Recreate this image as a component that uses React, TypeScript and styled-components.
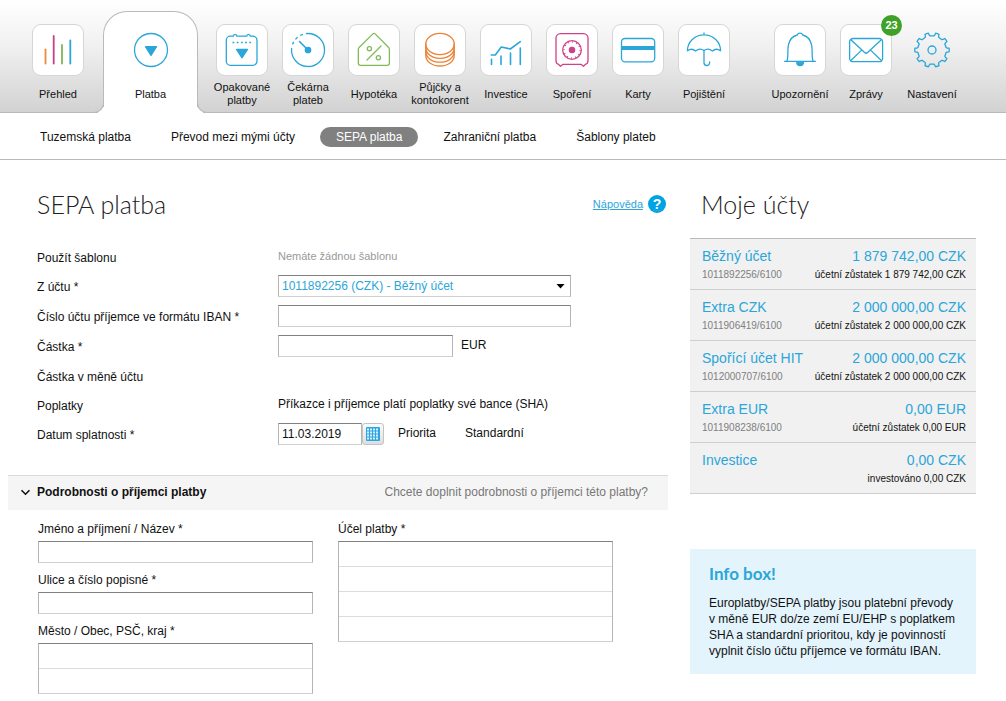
import React from "react";
import styled, { createGlobalStyle, css } from "styled-components";

const BLUE = "#2ba6d9";
const HEADING = `"Century Gothic", "Lato", sans-serif`;

const GlobalStyle = createGlobalStyle`
  *, *::before, *::after { box-sizing: border-box; }
  body {
    margin: 0;
    background: #fff;
    color: #111;
    font: 12px/16px Arial, "Liberation Sans", sans-serif;
  }
  input, select, textarea, button { font: inherit; color: inherit; }
`;

/* ---------- icons ---------- */

const Glyph = styled.svg<{ $color?: string }>`
  display: block;
  width: 50px;
  height: 50px;
  fill: none;
  stroke: ${(p) => p.$color ?? BLUE};
  stroke-width: 1.3;
  stroke-linecap: round;
  stroke-linejoin: round;
`;

const Icon = ({ color, children }: { color?: string; children: React.ReactNode }) => (
  <Glyph viewBox="1 1 50 50" $color={color} aria-hidden="true">
    {children}
  </Glyph>
);

const OverviewIcon = () => (
  <Icon>
    <g strokeWidth="1.8">
      <path d="M13.5 25.5V39.5" stroke="#f0883a" />
      <path d="M21.7 12V39.5" stroke="#c8417f" />
      <path d="M30 21V39.5" stroke="#7fb556" />
      <path d="M38.3 16.5V39.5" stroke={BLUE} />
    </g>
  </Icon>
);

const PaymentIcon = () => (
  <Icon>
    <circle cx="26" cy="26" r="16.5" />
    <path d="M20.5 22.7H31.5L26 31.5Z" fill={BLUE} />
  </Icon>
);

const CalendarIcon = () => (
  <Icon>
    <path d="M17.4 12.2H14.3a4 4 0 0 0-4 4V37.3a4 4 0 0 0 4 4H37a4 4 0 0 0 4-4V16.2a4 4 0 0 0-4-4H34.2M17.4 12.2C17.4 9.7 20.8 9.7 20.8 12.2H30.8C30.8 9.7 34.2 9.7 34.2 12.2" />
    <path d="M16.5 18.5H36" strokeDasharray="1.8 2.4" strokeLinecap="butt" />
    <path d="M20.5 25.5H31.5L26 33.8Z" fill={BLUE} />
  </Icon>
);

const WaitingIcon = () => (
  <Icon>
    <path d="M26 9.5A16.5 16.5 0 1 1 9.6 24.5" />
    <path d="M10.5 20.5A16.5 16.5 0 0 1 26 9.5" strokeDasharray="3 3" strokeLinecap="butt" />
    <path d="M17.5 17.5L26 26" strokeWidth="1.6" />
    <circle cx="26" cy="26" r="2.7" fill={BLUE} />
  </Icon>
);

const MortgageIcon = () => (
  <Icon color="#7fbb57">
    <path d="M24.9 9.9L11.3 23.2a3 3 0 0 0-1 2.2V39a2.3 2.3 0 0 0 2.3 2.3H39.1A2.3 2.3 0 0 0 41.4 39V25.4a3 3 0 0 0-1-2.2L27.1 9.9a1.6 1.6 0 0 0-2.2 0Z" />
    <path d="M33 22L19 36" />
    <circle cx="21.4" cy="24.7" r="2.1" />
    <circle cx="30.4" cy="33.7" r="2.1" />
  </Icon>
);

const LoansIcon = () => (
  <Icon color="#ee8033">
    <ellipse cx="26" cy="20" rx="14.2" ry="10.6" />
    <path d="M11.8 20V31.5C11.8 37.5 18 42 26 42S40.2 37.5 40.2 31.5V20" />
    <path d="M11.8 23.7C11.8 29.7 18 34.4 26 34.4S40.2 29.7 40.2 23.7" />
    <path d="M11.8 27.6C11.8 33.6 18 38.2 26 38.2S40.2 33.6 40.2 27.6" />
  </Icon>
);

const InvestIcon = () => (
  <Icon>
    <g strokeWidth="1.6">
      <path d="M11.3 31H15.3L21.3 23L30.3 25L40.3 17.7" />
      <path d="M11.5 35.4V40.4M21 32V40.4M30.5 29V40.4M40.3 24V40.4" />
    </g>
  </Icon>
);

const SafeIcon = () => (
  <Icon color="#d0418c">
    <path d="M14.5 9.6H37.5A4.5 4.5 0 0 1 42 14.1V36.5Q42 39.6 39.6 40.2L37.5 42.2L35.3 40.4H16.7L14.5 42.2L12.3 40.2Q10 39.6 10 36.5V14.1A4.5 4.5 0 0 1 14.5 9.6Z" />
    <circle cx="26" cy="26" r="9.3" />
    <circle cx="26" cy="26" r="8" strokeWidth="1.4" strokeDasharray="0.9 3.29" strokeLinecap="butt" />
    <circle cx="26" cy="26" r="2.6" fill="#d0418c" />
  </Icon>
);

const CardIcon = () => (
  <Icon>
    <rect x="9.5" y="14.5" width="33.2" height="23.3" rx="3.5" />
    <path d="M9.5 24H42.7" strokeWidth="4" strokeLinecap="butt" />
  </Icon>
);

const UmbrellaIcon = () => (
  <Icon>
    <path d="M26 9V10.6M9.4 26.8C9.4 17.8 16.8 10.8 26 10.8S42.6 17.8 42.6 26.8Q38.2 23.6 34.4 27Q30 23.6 26 26.6Q22 23.6 17.6 27Q13.8 23.6 9.4 26.8Z" />
    <path d="M26 26.6V38.7A2.8 2.8 0 0 0 31.6 38.7V38" />
  </Icon>
);

const BellIcon = () => (
  <Icon>
    <path d="M10.5 37.3H41.5M13 37C14.6 32 13.2 25.5 14.5 20.5C15.8 15.2 19 12 23.3 11C24 8.4 28 8.4 28.7 11C33 12 36.2 15.2 37.5 20.5C38.8 25.5 37.4 32 39 37" />
    <path d="M22.8 38.2H29.4A3.3 3.3 0 0 1 22.8 38.2Z" fill={BLUE} />
  </Icon>
);

const MailIcon = () => (
  <Icon>
    <rect x="9.6" y="14.5" width="33" height="23.2" rx="3.5" />
    <path d="M10.6 15.6L24.6 28.5A2.2 2.2 0 0 0 27.6 28.5L41.6 15.6M10.6 36.7L21.4 26.4M41.6 36.7L30.8 26.4" />
  </Icon>
);

const gearPath = (() => {
  const teeth = 10;
  const point = (radius: number, deg: number) => {
    const a = (deg * Math.PI) / 180;
    return `${(26 + radius * Math.cos(a)).toFixed(2)} ${(26 + radius * Math.sin(a)).toFixed(2)}`;
  };
  let d = `M${point(14.2, -10.5)}`;
  for (let i = 0; i < teeth; i++) {
    const a = (i * 360) / teeth;
    d += `Q${point(15, -7 + a)} ${point(17.2, -6 + a)}A17.4 17.4 0 0 1 ${point(17.2, 6 + a)}`;
    d += `Q${point(15, 7 + a)} ${point(14.2, 10.5 + a)}A14.2 14.2 0 0 1 ${point(14.2, 25.5 + a)}`;
  }
  return d + "Z";
})();

const GearIcon = () => (
  <Icon>
    <path d={gearPath} />
    <circle cx="26" cy="26" r="4" />
  </Icon>
);

/* ---------- header ---------- */

const Header = styled.header`
  padding-top: 11px;
  border-bottom: 1px solid #bababa;
  background: linear-gradient(#fff 0%, #f1f1f1 40%, #d2d2d2 100%);
`;

const MainNav = styled.nav`
  display: flex;
  align-items: flex-start;
  padding-left: 25px;
`;

const NavItem = styled.a<{ $active?: boolean; $apart?: boolean }>`
  position: relative;
  flex: none;
  display: flex;
  flex-direction: column;
  align-items: center;
  gap: 5px;
  width: 66px;
  margin-left: ${(p) => (p.$apart ? 30 : 0)}px;
  padding: 13px 0 5px;
  color: #111;
  text-decoration: none;
  ${(p) =>
    p.$active &&
    css`
      width: 95px;
      margin: 0 11px -1px 12px;
      padding: 12px 0 6px;
      border: 1px solid #bababa;
      border-bottom: 0;
      border-radius: 24px 24px 0 0;
      background: #fff;

      &::before,
      &::after {
        content: "";
        position: absolute;
        bottom: 0;
        width: 10px;
        height: 10px;
        border: 0 solid #bababa;
        border-bottom-width: 1px;
      }
      &::before {
        right: 93px;
        border-right-width: 1px;
        border-bottom-right-radius: 10px;
        box-shadow: 4px 4px 0 #fff;
      }
      &::after {
        left: 93px;
        border-left-width: 1px;
        border-bottom-left-radius: 10px;
        box-shadow: -4px 4px 0 #fff;
      }
    `}
`;

const Tile = styled.span<{ $plain?: boolean }>`
  position: relative;
  width: 52px;
  height: 52px;
  border: 1px solid ${(p) => (p.$plain ? "transparent" : "#d6d6d6")};
  border-radius: 9px;
  background: ${(p) => (p.$plain ? "transparent" : "#fff")};
`;

const Badge = styled.span`
  position: absolute;
  top: -10px;
  right: -11px;
  width: 21px;
  height: 21px;
  border-radius: 50%;
  background: #3fa127;
  color: #fff;
  font-size: 11px;
  font-weight: bold;
  line-height: 21px;
  text-align: center;
`;

const NavLabel = styled.span`
  display: flex;
  align-items: center;
  height: 26px;
  font-size: 11px;
  line-height: 13px;
  text-align: center;
`;

const SubNav = styled.nav`
  display: flex;
  align-items: center;
  gap: 10px;
  padding: 14px 25px 12px;
  border-bottom: 1px solid #bababa;
`;

const SubLink = styled.a<{ $active?: boolean }>`
  padding: 0 ${(p) => (p.$active ? 16 : 15)}px;
  border-radius: 10px;
  background: ${(p) => (p.$active ? "#808080" : "transparent")};
  color: ${(p) => (p.$active ? "#fff" : "#111")};
  line-height: 20px;
  text-decoration: none;
`;

/* ---------- page body ---------- */

const Page = styled.div`
  display: flex;
  align-items: flex-start;
  gap: 22px;
  padding: 30px 30px 8px 8px;
`;

const Main = styled.main`
  flex: 1;
  min-width: 0;
`;

const Aside = styled.aside`
  flex: none;
  width: 286px;
`;

const Title = styled.h1`
  margin: 0;
  color: #222;
  font: 300 25px/28px ${HEADING};
`;

const AsideTitle = styled(Title).attrs({ as: "h2" })`
  margin: 0 11px 20px;
`;

const TitleRow = styled.div`
  display: flex;
  align-items: center;
  justify-content: space-between;
  padding: 0 2px 0 29px;
`;

const HelpLink = styled.a`
  display: flex;
  align-items: center;
  gap: 5px;
  color: ${BLUE};
  font-size: 11px;
`;

const HelpMark = styled.span`
  width: 18px;
  height: 18px;
  border-radius: 50%;
  background: #00a4e4;
  color: #fff;
  font-size: 14px;
  font-weight: bold;
  line-height: 18px;
  text-align: center;
`;

const Form = styled.form`
  margin-top: 25px;
`;

const Row = styled.div<{ $short?: boolean }>`
  display: grid;
  grid-template-columns: 241px 1fr;
  align-items: center;
  height: ${(p) => (p.$short ? 28 : 30)}px;
  padding-left: 29px;
`;

const RowLabel = styled.label`
  padding-top: 2px;
`;

const RowValue = styled.div`
  display: flex;
  align-items: center;
`;

const Note = styled.span<{ $muted?: boolean; $gap?: number }>`
  margin-left: ${(p) => p.$gap ?? 0}px;
  padding-bottom: 2px;
  color: ${(p) => (p.$muted ? "#999" : "inherit")};
  font-size: ${(p) => (p.$muted ? 11 : 12)}px;
`;

const field = css`
  display: block;
  margin: 0;
  padding: 0 3px;
  border: 1px solid #b5b5b5;
  border-top-color: #808080;
  border-bottom-color: #d0d0d0;
  border-radius: 0;
  background: #fff;
  outline: none;
`;

const TextInput = styled.input<{ $width?: number }>`
  ${field}
  width: ${(p) => (p.$width ? `${p.$width}px` : "100%")};
  height: 22px;
`;

const SelectBox = styled.div`
  position: relative;
  width: 293px;

  svg {
    position: absolute;
    top: 9px;
    right: 6px;
    pointer-events: none;
  }
`;

const Select = styled.select`
  ${field}
  appearance: none;
  width: 100%;
  height: 22px;
  color: ${BLUE};
`;

const LinedArea = styled.textarea<{ rows: number }>`
  ${field}
  width: 100%;
  height: ${(p) => p.rows * 25 + 1}px;
  overflow: hidden;
  resize: none;
  line-height: 25px;
  background: repeating-linear-gradient(#fff 0 24px, #dcdcdc 24px 25px);
`;

const DateButton = styled.button`
  display: grid;
  place-items: center;
  width: 22px;
  height: 22px;
  padding: 0;
  border: 1px solid #c3c3c3;
  border-radius: 3px;
  background: linear-gradient(#fafafa, #dedede);
`;

const Section = styled.section`
  margin-top: 26px;
`;

const SectionBar = styled.header`
  display: flex;
  align-items: center;
  justify-content: space-between;
  height: 35px;
  padding: 0 20px 2px 12px;
  border-top: 1px solid #d9d9d9;
  background: #f5f5f5;
  color: #777;
`;

const Toggle = styled.button`
  display: flex;
  align-items: center;
  gap: 6px;
  padding: 0;
  border: 0;
  background: none;
  color: #111;
  font-weight: bold;
`;

const Details = styled.div`
  display: grid;
  grid-template-columns: 275px 275px;
  gap: 25px;
  padding: 11px 30px 0;
`;

const Stack = styled.div`
  display: flex;
  flex-direction: column;
  gap: 9px;
`;

const Field = styled.label`
  display: grid;
  gap: 4px;
`;

const Accounts = styled.ul`
  margin: 0;
  padding: 0;
  border-top: 1px solid #bababa;
  background: #f1f1f1;
  list-style: none;
`;

const Account = styled.li`
  display: grid;
  grid-template-columns: auto 1fr;
  align-content: start;
  height: 51px;
  padding: 8px 10px 0 12px;
  border-bottom: 1px solid #cfcfcf;
`;

const AccountLink = styled.a`
  color: ${BLUE};
  font-size: 14px;
  line-height: 18px;
  text-decoration: none;
`;

const Balance = styled.span`
  color: ${BLUE};
  font-size: 14px;
  line-height: 18px;
  text-align: right;
`;

const Small = styled.span<{ $right?: boolean }>`
  color: ${(p) => (p.$right ? "#111" : "#808080")};
  font-size: 10px;
  line-height: 20px;
  text-align: ${(p) => (p.$right ? "right" : "left")};
`;

const InfoBox = styled.section`
  margin-top: 55px;
  padding: 14px 19px 15px;
  background: #e3f4fc;
`;

const InfoTitle = styled.h3`
  margin: 0 0 10px;
  color: ${BLUE};
  font: 700 17px/22px ${HEADING};
`;

const InfoText = styled.p`
  margin: 0;
`;

type NavEntry = { label: React.ReactNode; icon: React.ReactNode; active?: boolean; apart?: boolean; plain?: boolean; badge?: number };

const navEntries: NavEntry[] = [
  { label: "Přehled", icon: <OverviewIcon /> },
  { label: "Platba", icon: <PaymentIcon />, active: true, plain: true },
  { label: <>Opakované<br />platby</>, icon: <CalendarIcon /> },
  { label: <>Čekárna<br />plateb</>, icon: <WaitingIcon /> },
  { label: "Hypotéka", icon: <MortgageIcon /> },
  { label: <>Půjčky a<br />kontokorent</>, icon: <LoansIcon /> },
  { label: "Investice", icon: <InvestIcon /> },
  { label: "Spoření", icon: <SafeIcon /> },
  { label: "Karty", icon: <CardIcon /> },
  { label: "Pojištění", icon: <UmbrellaIcon /> },
  { label: "Upozornění", icon: <BellIcon />, apart: true },
  { label: "Zprávy", icon: <MailIcon />, badge: 23 },
  { label: "Nastavení", icon: <GearIcon />, plain: true },
];

const subEntries = ["Tuzemská platba", "Převod mezi mými účty", "SEPA platba", "Zahraniční platba", "Šablony plateb"];

const accounts = [
  { name: "Běžný účet", number: "1011892256/6100", balance: "1 879 742,00 CZK", note: "účetní zůstatek 1 879 742,00 CZK" },
  { name: "Extra CZK", number: "1011906419/6100", balance: "2 000 000,00 CZK", note: "účetní zůstatek 2 000 000,00 CZK" },
  { name: "Spořící účet HIT", number: "1012000707/6100", balance: "2 000 000,00 CZK", note: "účetní zůstatek 2 000 000,00 CZK" },
  { name: "Extra EUR", number: "1011908238/6100", balance: "0,00 EUR", note: "účetní zůstatek 0,00 EUR" },
  { name: "Investice", number: "", balance: "0,00 CZK", note: "investováno 0,00 CZK" },
];

export default function App() {
  return (
    <>
      <GlobalStyle />
      <Header>
        <MainNav>
          {navEntries.map((entry, i) => (
            <NavItem key={i} href="#" $active={entry.active} $apart={entry.apart}>
              <Tile $plain={entry.plain}>
                {entry.icon}
                {entry.badge && <Badge>{entry.badge}</Badge>}
              </Tile>
              <NavLabel>
                <span>{entry.label}</span>
              </NavLabel>
            </NavItem>
          ))}
        </MainNav>
      </Header>
      <SubNav>
        {subEntries.map((label) => (
          <SubLink key={label} href="#" $active={label === "SEPA platba"}>
            {label}
          </SubLink>
        ))}
      </SubNav>

      <Page>
        <Main>
          <TitleRow>
            <Title>SEPA platba</Title>
            <HelpLink href="#">
              Nápověda <HelpMark>?</HelpMark>
            </HelpLink>
          </TitleRow>

          <Form>
            <Row $short>
              <RowLabel as="span">Použít šablonu</RowLabel>
              <RowValue>
                <Note $muted>Nemáte žádnou šablonu</Note>
              </RowValue>
            </Row>
            <Row>
              <RowLabel htmlFor="account">Z účtu *</RowLabel>
              <SelectBox>
                <Select id="account">
                  <option>1011892256 (CZK) - Běžný účet</option>
                </Select>
                <svg width="9" height="5" viewBox="0 0 9 5" aria-hidden="true">
                  <path d="M0.5 0H8.5L4.5 4.5Z" fill="#000" />
                </svg>
              </SelectBox>
            </Row>
            <Row>
              <RowLabel htmlFor="iban">Číslo účtu příjemce ve formátu IBAN *</RowLabel>
              <TextInput id="iban" $width={293} />
            </Row>
            <Row>
              <RowLabel htmlFor="amount">Částka *</RowLabel>
              <RowValue>
                <TextInput id="amount" $width={175} />
                <Note $gap={8}>EUR</Note>
              </RowValue>
            </Row>
            <Row>
              <RowLabel as="span">Částka v měně účtu</RowLabel>
            </Row>
            <Row $short>
              <RowLabel as="span">Poplatky</RowLabel>
              <RowValue>
                <Note>Příkazce i příjemce platí poplatky své bance (SHA)</Note>
              </RowValue>
            </Row>
            <Row>
              <RowLabel htmlFor="due">Datum splatnosti *</RowLabel>
              <RowValue>
                <TextInput id="due" $width={84} defaultValue="11.03.2019" />
                <DateButton type="button" aria-label="Kalendář">
                  <svg width="14" height="14" viewBox="0 0 14 14" aria-hidden="true">
                    <rect width="14" height="14" rx="1" fill="#2ba6e0" />
                    <path
                      d="M1 2.5H13M1 5.5H13M1 8.5H13M1 11.5H13"
                      stroke="#d9f0fb"
                      strokeWidth="2"
                      strokeDasharray="2 1"
                    />
                  </svg>
                </DateButton>
                <Note $gap={14}>Priorita</Note>
                <Note $gap={29}>Standardní</Note>
              </RowValue>
            </Row>

            <Section>
              <SectionBar>
                <Toggle type="button">
                  <svg width="11" height="7" viewBox="0 0 11 7" aria-hidden="true">
                    <path d="M1.5 1.2L5.5 5.2L9.5 1.2" fill="none" stroke="#111" strokeWidth="1.6" />
                  </svg>
                  Podrobnosti o příjemci platby
                </Toggle>
                <span>Chcete doplnit podrobnosti o příjemci této platby?</span>
              </SectionBar>
              <Details>
                <Stack>
                  <Field>
                    Jméno a příjmení / Název *
                    <TextInput />
                  </Field>
                  <Field>
                    Ulice a číslo popisné *
                    <TextInput />
                  </Field>
                  <Field>
                    Město / Obec, PSČ, kraj *
                    <LinedArea rows={2} />
                  </Field>
                </Stack>
                <Stack>
                  <Field>
                    Účel platby *
                    <LinedArea rows={4} />
                  </Field>
                </Stack>
              </Details>
            </Section>
          </Form>
        </Main>

        <Aside>
          <AsideTitle>Moje účty</AsideTitle>
          <Accounts>
            {accounts.map((a) => (
              <Account key={a.name}>
                <AccountLink href="#">{a.name}</AccountLink>
                <Balance>{a.balance}</Balance>
                <Small>{a.number}</Small>
                <Small $right>{a.note}</Small>
              </Account>
            ))}
          </Accounts>
          <InfoBox>
            <InfoTitle>Info box!</InfoTitle>
            <InfoText>
              Europlatby/SEPA platby jsou platební převody v&nbsp;měně EUR do/ze zemí EU/EHP s poplatkem SHA a
              standardní prioritou, kdy je povinností vyplnit číslo účtu příjemce ve formátu IBAN.
            </InfoText>
          </InfoBox>
        </Aside>
      </Page>
    </>
  );
}
